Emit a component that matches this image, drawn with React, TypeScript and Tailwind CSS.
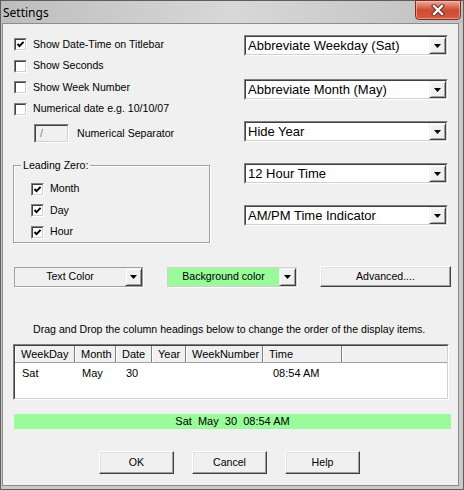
import React from "react";

const font = "font-['Liberation_Sans',Arial,sans-serif]";

function Check({ checked }: { checked?: boolean }) {
  return (
    <span className="relative block w-[13px] h-[13px] shrink-0 bg-white border border-t-[#808080] border-l-[#808080] border-b-white border-r-white">
      <span className="absolute inset-0 border border-t-[#404040] border-l-[#404040] border-b-[#d4d0c8] border-r-[#d4d0c8]" />
      {checked && (
        <svg className="absolute left-[1px] top-[1px]" width="9" height="9" viewBox="0 0 9 9">
          <path d="M1.5 4 L3.5 6.2 L7.6 1.8" fill="none" stroke="#000" strokeWidth="1.9" />
        </svg>
      )}
    </span>
  );
}

function CheckRow({ label, checked, h = "h-[21px]" }: { label: string; checked?: boolean; h?: string }) {
  return (
    <div className={`flex items-center gap-[6px] ${h}`}>
      <Check checked={checked} />
      <span>{label}</span>
    </div>
  );
}

function Arrow() {
  return (
    <svg width="7" height="4" viewBox="0 0 7 4">
      <path d="M0 0 H7 L3.5 4 Z" fill="#000" />
    </svg>
  );
}

function DropBtn() {
  return (
    <span className="flex items-center justify-center w-[17px] h-full bg-[#f0f0f0] border border-t-[#f0f0f0] border-l-[#f0f0f0] border-b-[#404040] border-r-[#404040] shadow-[inset_1px_1px_0_#fff,inset_-1px_-1px_0_#a0a0a0]">
      <Arrow />
    </span>
  );
}

function Combo({ value, className = "" }: { value: string; className?: string }) {
  return (
    <div
      className={`flex h-[21px] w-[204px] bg-white border border-t-[#808080] border-l-[#808080] border-b-white border-r-white ${className}`}
    >
      <div className="flex flex-1 border border-t-[#404040] border-l-[#404040] border-b-[#d4d0c8] border-r-[#d4d0c8]">
        <span className="flex-1 flex items-center pl-[2px] leading-none text-[13px]">{value}</span>
        <DropBtn />
      </div>
    </div>
  );
}

function Button({ label, className = "" }: { label: string; className?: string }) {
  return (
    <button
      className={`flex items-center justify-center bg-[#f0f0f0] border border-t-[#fff] border-l-[#fff] border-b-[#404040] border-r-[#404040] shadow-[inset_-1px_-1px_0_#a0a0a0,inset_1px_1px_0_#e3e3e3] ${className}`}
    >
      {label}
    </button>
  );
}

const cols = [
  { name: "WeekDay", w: "w-[60px]", val: "Sat", pl: "pl-[7px]" },
  { name: "Month", w: "w-[41px]", val: "May", pl: "pl-[7px]" },
  { name: "Date", w: "w-[36px]", val: "30", pl: "pl-[10px]" },
  { name: "Year", w: "w-[34px]", val: "", pl: "pl-[6px]" },
  { name: "WeekNumber", w: "w-[77px]", val: "", pl: "pl-[6px]" },
  { name: "Time", w: "w-[79px]", val: "08:54 AM", pl: "pl-[10px]" },
];

export default function App() {
  return (
    <div className={`w-[464px] h-[490px] flex flex-col bg-[#c9c9c9] border border-[#5e5e5e] text-[12px] text-black ${font}`}>
      {/* title bar */}
      <div className="relative h-[22px] flex items-start bg-linear-to-r from-[#bdbdbd] via-[#d8d8d8] to-[#c0c0c0]">
        <span className="pl-[2px] pt-[3px] text-[12px] font-['Noto_Sans',sans-serif]">Settings</span>
        <div className="ml-auto mr-[2px] -mt-[1px] w-[46px] h-[20px] rounded-b-[4px] border border-[#7a2e22] bg-linear-to-b from-[#e8aa9c] via-[#cf4b31] to-[#d35a40] flex items-center justify-center shadow-[inset_0_0_0_1px_rgba(255,210,200,0.5)]">
          <svg width="14" height="12" viewBox="0 0 14 12">
            <path d="M3 2 L11 10 M11 2 L3 10" stroke="#5a2a22" strokeWidth="4.2" strokeLinecap="square" />
            <path d="M3 2 L11 10 M11 2 L3 10" stroke="#fff" strokeWidth="2.3" strokeLinecap="square" />
          </svg>
        </div>
      </div>

      {/* client */}
      <div className="flex-1 ml-[1px] mr-[4px] mb-[3px] bg-[#f0f0f0] border border-[#8d8d8d] flex flex-col pl-[10px] text-[10.6px]">
        <div className="flex">
          {/* left column */}
          <div className="w-[197px] pt-[10px]">
            <div className="pl-[1px]">
              <CheckRow label="Show Date-Time on Titlebar" checked />
              <CheckRow label="Show Seconds" h="h-[22px]" />
              <CheckRow label="Show Week Number" />
              <CheckRow label="Numerical date e.g. 10/10/07" h="h-[22px]" />
            </div>
            <div className="flex items-center mt-[4px] pl-[21px] h-[19px]">
              <span className="w-[35px] h-[19px] border border-t-[#808080] border-l-[#808080] border-b-white border-r-white">
                <span className="flex items-center h-full pl-[4px] border border-t-[#404040] border-l-[#404040] border-b-[#d4d0c8] border-r-[#d4d0c8] text-[#808080]">
                  /
                </span>
              </span>
              <span className="ml-[8px]">Numerical Separator</span>
            </div>
            <div className="relative mt-[22px] h-[78px] border border-[#a0a0a0] shadow-[1px_1px_0_#fff,inset_1px_1px_0_#fff] pt-[12px] pl-[17px]">
              <span className="absolute -top-[8px] left-[7px] px-[2px] bg-[#f0f0f0]">Leading Zero:</span>
              <CheckRow label="Month" checked h="h-[22px]" />
              <CheckRow label="Day" checked />
              <CheckRow label="Hour" checked h="h-[22px]" />
            </div>
          </div>

          {/* right column */}
          <div className="ml-[34px] pt-[11px] flex flex-col">
            <Combo value="Abbreviate Weekday (Sat)" />
            <Combo value="Abbreviate Month (May)" className="mt-[23px]" />
            <Combo value="Hide Year" className="mt-[21px]" />
            <Combo value="12 Hour Time" className="mt-[21px]" />
            <Combo value="AM/PM Time Indicator" className="mt-[21px]" />
          </div>
        </div>

        {/* colour row */}
        <div className="flex items-center mt-[23px] h-[21px]">
          <div className="flex w-[129px] h-[20px] ml-[1px] border border-[#a0a0a0] shadow-[1px_1px_0_#fff]">
            <span className="flex-1 flex items-center justify-center">Text Color</span>
            <DropBtn />
          </div>
          <div className="flex w-[130px] h-[20px] ml-[24px] border border-[#d0d0d0] shadow-[1px_1px_0_#fff]">
            <span className="flex-1 flex items-center justify-center bg-[#99fb99]">Background color</span>
            <DropBtn />
          </div>
          <Button label="Advanced...." className="ml-[23px] w-[131px] h-[21px]" />
        </div>

        <div className="mt-[36px] h-[13px] flex items-center pl-[20px] leading-none">
          Drag and Drop the column headings below to change the order of the display items.
        </div>

        {/* list view */}
        <div className="mt-[8px] w-[436px] h-[56px] bg-white border border-t-[#808080] border-l-[#808080] border-b-white border-r-white text-[11px]">
          <div className="h-full border border-t-[#404040] border-l-[#404040] border-b-[#d4d0c8] border-r-[#d4d0c8] flex flex-col">
            <div className="flex h-[17px] bg-[#f0f0f0] border-b border-[#a0a0a0]">
              {cols.map((c) => (
                <span
                  key={c.name}
                  className={`${c.w} h-full flex items-center pl-[5px] border-r border-r-[#808080] border-l border-l-white`}
                >
                  {c.name}
                </span>
              ))}
              <span className="flex-1 border-l border-l-white" />
            </div>
            <div className="flex h-[20px] items-center">
              {cols.map((c) => (
                <span key={c.name} className={`${c.w} ${c.pl}`}>
                  {c.val}
                </span>
              ))}
            </div>
          </div>
        </div>

        <div className="mt-[14px] ml-[1px] w-[437px] h-[15px] bg-[#99fb99] flex items-center justify-center whitespace-pre text-[11px]">
          {"Sat  May  30  08:54 AM"}
        </div>

        <div className="mt-[22px] flex justify-center gap-[18px] pr-[12px]">
          <Button label="OK" className="w-[75px] h-[23px]" />
          <Button label="Cancel" className="w-[75px] h-[23px]" />
          <Button label="Help" className="w-[75px] h-[23px]" />
        </div>
      </div>
    </div>
  );
}
